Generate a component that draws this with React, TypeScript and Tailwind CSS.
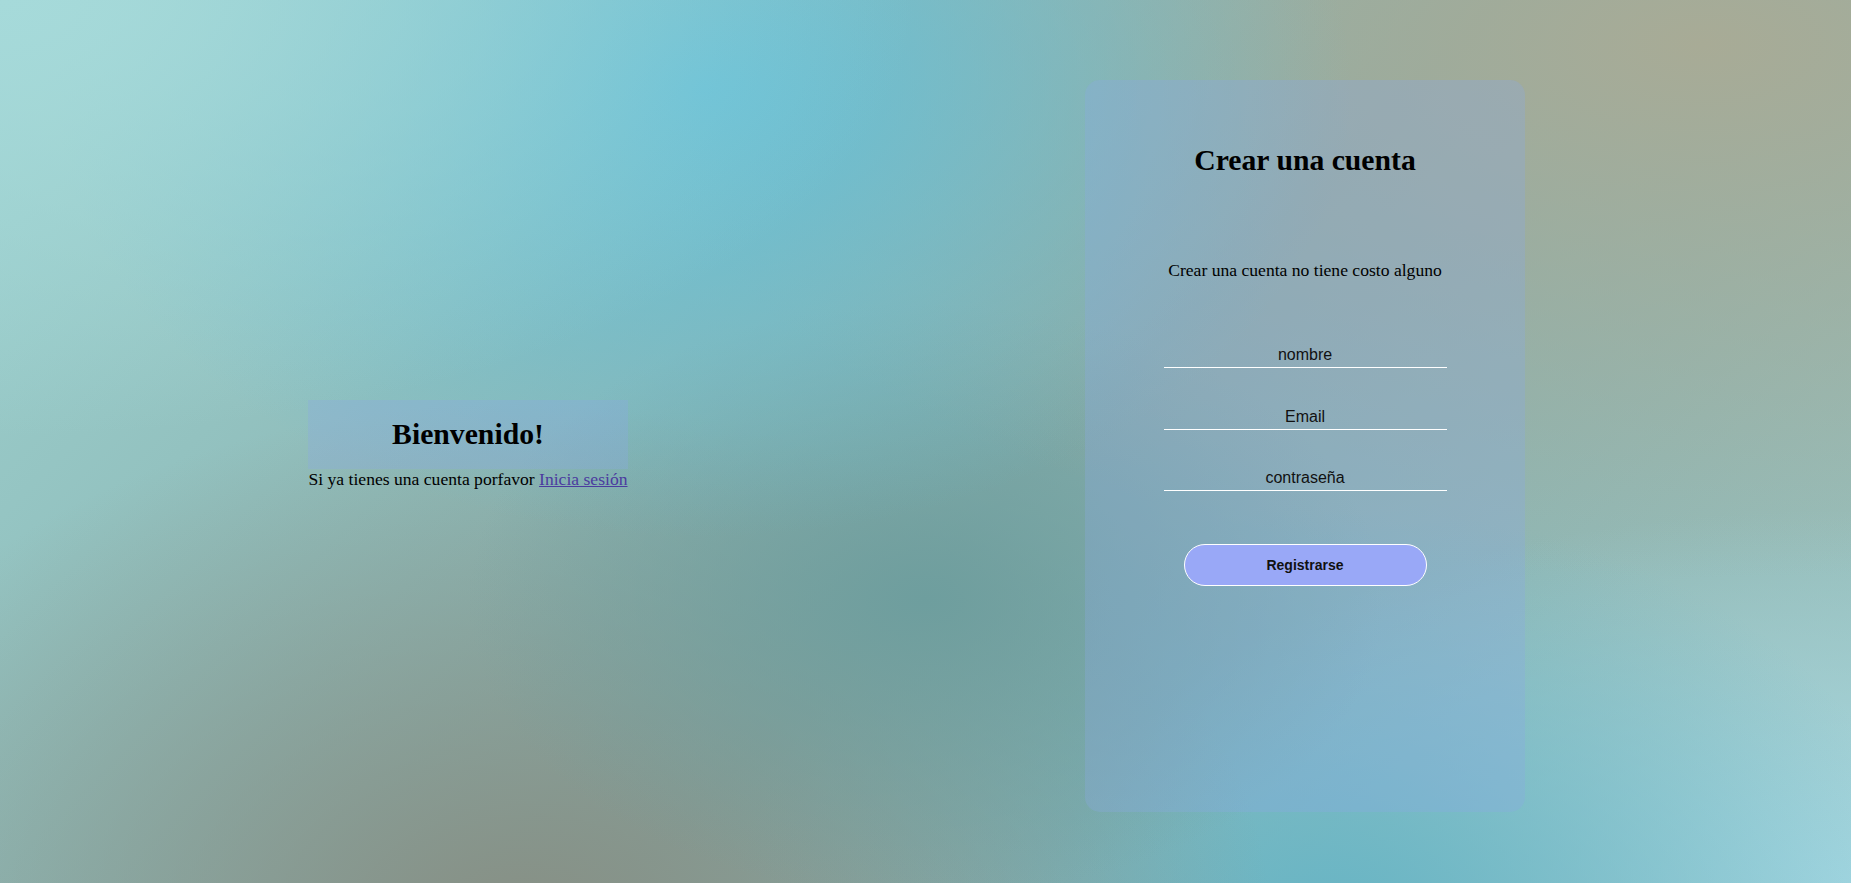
export default function App() {
  return (
    <main className="flex h-screen w-full overflow-hidden font-['Liberation_Serif',serif] text-black bg-[radial-gradient(ellipse_at_0%_0%,#a6dada_0%,transparent_35%),radial-gradient(ellipse_at_38%_10%,#66bfd6_0%,transparent_40%),radial-gradient(ellipse_at_92%_5%,#a8ab96_0%,transparent_45%),radial-gradient(ellipse_at_50%_68%,#6e9e9e_0%,transparent_35%),radial-gradient(ellipse_at_28%_105%,#878f84_0%,transparent_40%),radial-gradient(ellipse_at_72%_105%,#66b4c4_0%,transparent_32%),radial-gradient(ellipse_at_100%_100%,#a6d8e2_0%,transparent_30%),linear-gradient(135deg,#9ed2d0,#84acaa_55%,#9ec4c0)]">
      <section className="flex w-[936px] items-center justify-center pt-[6px]">
        <div className="flex flex-col">
          <h1 className="bg-[rgba(140,170,230,0.3)] py-[17px] text-center text-[29.7px] font-bold leading-[35px]">Bienvenido!</h1>
          <p className="text-[17.6px] leading-[20px]">
            Si ya tienes una cuenta porfavor{' '}
            <a href="#" className="text-[#4b3b9f] underline">Inicia sesión</a>
          </p>
        </div>
      </section>

      <div className="ml-[149px] mt-[80px] flex h-[732px] w-[440px] flex-col items-center rounded-[15px] bg-[rgba(140,170,230,0.3)] pt-[63px]">
        <h1 className="text-[29.7px] font-bold leading-[35px]">Crear una cuenta</h1>
        <p className="mt-[82px] text-[17.6px] leading-[20px]">Crear una cuenta no tiene costo alguno</p>

        <form className="flex flex-col items-center font-['Liberation_Sans',sans-serif]">
          <input
            type="text"
            placeholder="nombre"
            className="mt-[62px] h-[26px] w-[283px] border-b border-white bg-transparent text-center text-base outline-none placeholder:text-[#111]"
          />
          <input
            type="email"
            placeholder="Email"
            className="mt-9 h-[26px] w-[283px] border-b border-white bg-transparent text-center text-base outline-none placeholder:text-[#111]"
          />
          <input
            type="password"
            placeholder="contraseña"
            className="mt-[35px] h-[26px] w-[283px] border-b border-white bg-transparent text-center text-base outline-none placeholder:text-[#111]"
          />
          <button
            type="button"
            className="mt-[53px] h-[42px] w-[243px] rounded-full border border-white bg-[#99a8f7] text-sm font-bold text-[#111]"
          >
            Registrarse
          </button>
        </form>
      </div>
    </main>
  )
}
